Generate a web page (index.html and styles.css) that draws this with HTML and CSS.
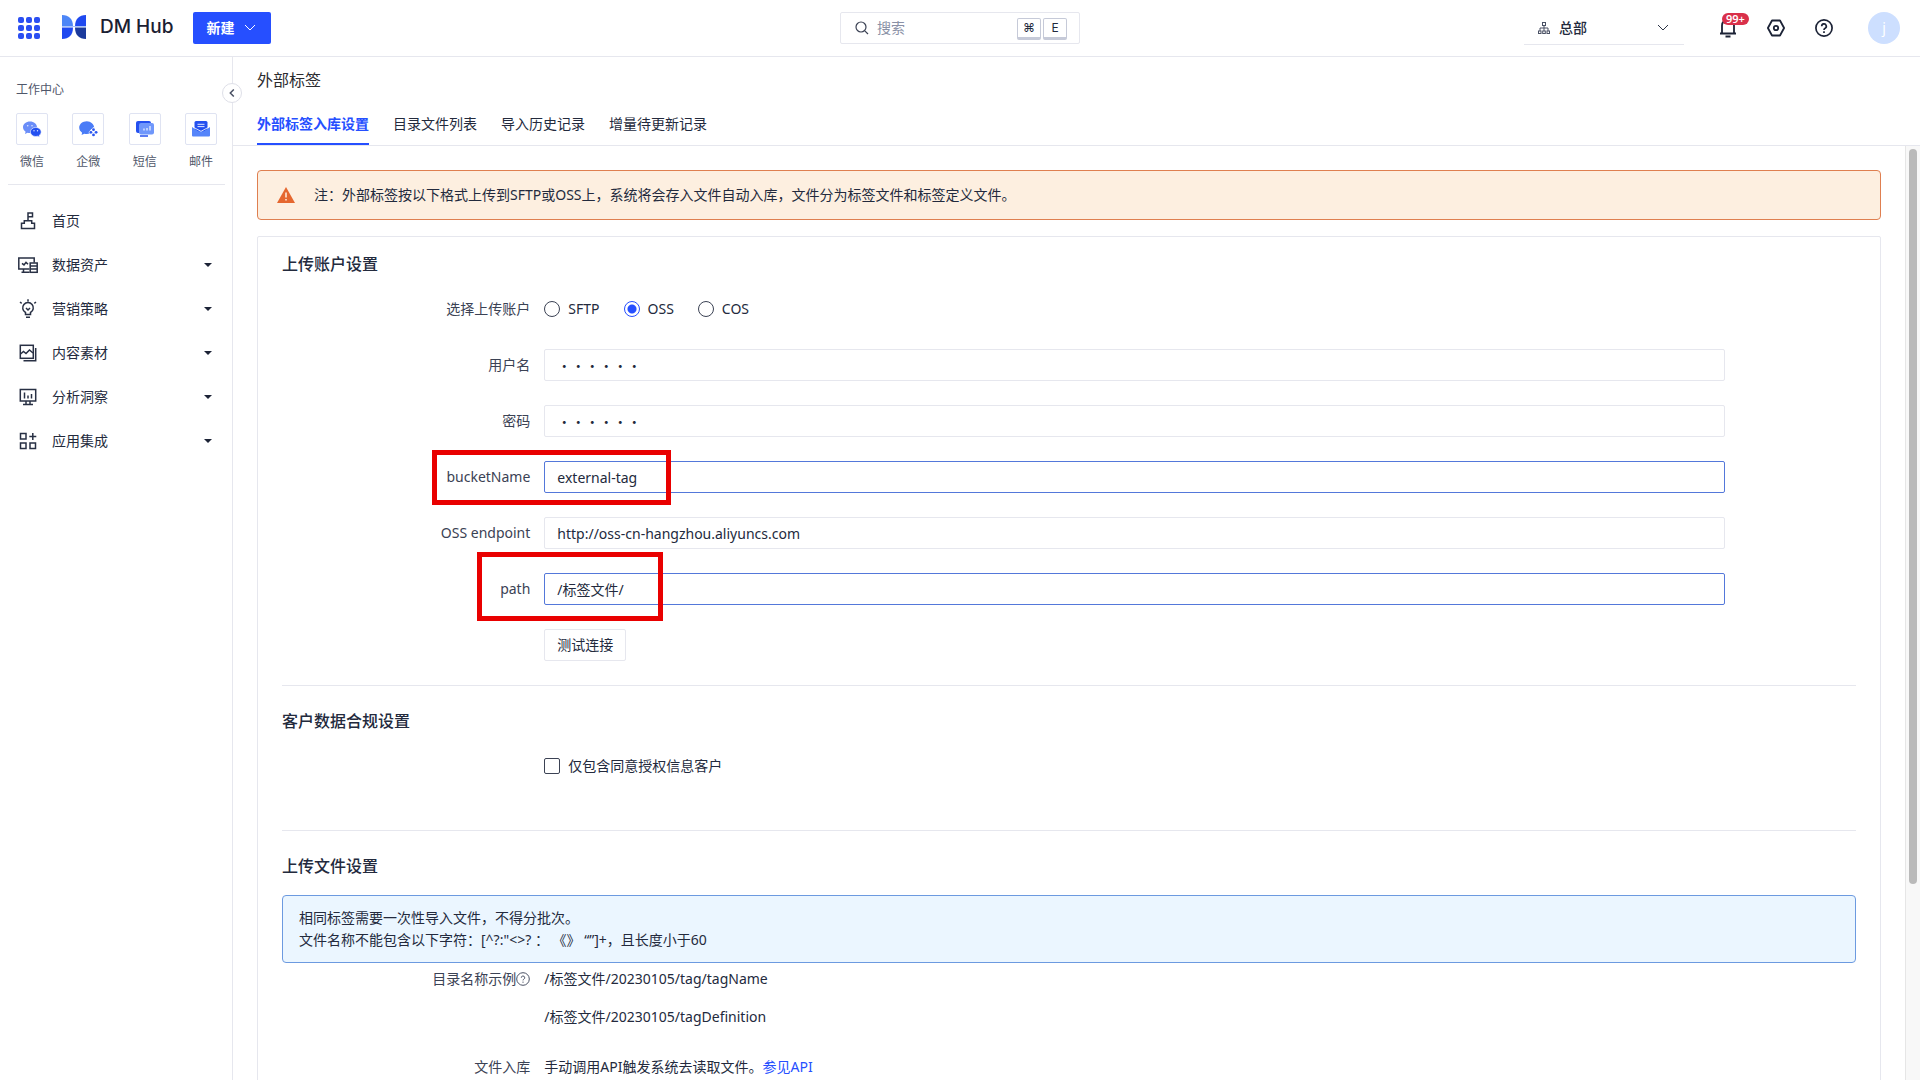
FILE: index.html
```html
<!DOCTYPE html>
<html lang="zh-CN">
<head>
<meta charset="utf-8">
<meta name="viewport" content="width=device-width, initial-scale=1">
<title>外部标签 - DM Hub</title>
<link rel="stylesheet" href="styles.css">
</head>
<body>
<header class="topbar">
  <button class="icon-btn apps" aria-label="应用">
    <svg width="22" height="22" viewBox="0 0 22 22" fill="#2b4ff2"><rect width="6" height="6" rx="2"/><rect x="8" width="6" height="6" rx="2"/><rect x="16" width="6" height="6" rx="2"/><rect y="8" width="6" height="6" rx="2"/><rect x="8" y="8" width="6" height="6" rx="2"/><rect x="16" y="8" width="6" height="6" rx="2"/><rect y="16" width="6" height="6" rx="2"/><rect x="8" y="16" width="6" height="6" rx="2"/><rect x="16" y="16" width="6" height="6" rx="2"/></svg>
  </button>
  <a class="brand" href="#">
    <svg width="24" height="24" viewBox="0 0 24 24"><path fill="#4d86f7" d="M0 0C7 0 11 4 11 11.500H0Z"/><path fill="#1f49f0" d="M24 0C17 0 13 4 13 11.500H24Z"/><path fill="#1f49f0" d="M0 12.500H11C11 20 7 24 0 24Z"/><path fill="#1b3a9c" d="M24 12.500H13C13 20 17 24 24 24Z"/><path fill="#a9c4fb" d="M0 11h24v1H0z"/></svg>
    <span>DM Hub</span>
  </a>
  <button class="create">新建
    <svg width="12" height="8" viewBox="0 0 12 8" fill="none" stroke="#fff"><path d="M1 1l5 5 5-5"/></svg>
  </button>
  <label class="search">
    <svg width="14" height="14" viewBox="0 0 14 14" fill="none" stroke="#3b4254" stroke-width="1.200"><circle cx="6" cy="6" r="5"/><path d="M9.800 9.800L13 13"/></svg>
    <input type="search" placeholder="搜索" aria-label="搜索">
    <kbd>⌘</kbd><kbd>E</kbd>
  </label>
  <div class="tools">
    <button class="org">
      <svg width="12" height="12" viewBox="0 0 12 12" fill="none" stroke="#4a5164"><rect x="4.500" y=".5" width="3" height="3"/><path d="M6 3.500V9M2 9V6h8v3"/><rect x=".5" y="9" width="2.500" height="2.500"/><rect x="4.700" y="9" width="2.600" height="2.500"/><rect x="9" y="9" width="2.500" height="2.500"/></svg>
      <span>总部</span>
      <svg width="12" height="8" viewBox="0 0 12 8" fill="none" stroke="#2c3345"><path d="M1 1l5 5 5-5"/></svg>
    </button>
    <button class="icon-btn bell" aria-label="通知">
      <svg width="18" height="20" viewBox="0 0 18 20" fill="none" stroke="#1c2336" stroke-width="1.800"><path d="M1 15.500h16M3 15.500V7.500a6 6 0 0 1 12 0v8M6.500 18.500h5"/></svg>
      <span class="count">99+</span>
    </button>
    <button class="icon-btn" aria-label="设置">
      <svg width="18" height="18" viewBox="0 0 18 18" fill="none" stroke="#1c2336" stroke-width="1.800"><path stroke-linejoin="round" d="M5 1.500h8L17.100 9 13 16.500H5L.9 9Z"/><circle cx="9" cy="9" r="2.200"/></svg>
    </button>
    <button class="icon-btn" aria-label="帮助">
      <svg width="18" height="18" viewBox="0 0 18 18" fill="none" stroke="#1c2336" stroke-width="1.700"><circle cx="9" cy="9" r="8.100"/><path d="M6.700 7.200a2.300 2.300 0 1 1 3.400 2C9.300 9.600 9 10 9 10.900M9 12.200v1.700"/></svg>
    </button>
    <button class="avatar">j</button>
  </div>
</header>

<div class="shell">
  <aside class="sidebar">
    <button class="collapse" aria-label="收起">
      <svg width="6" height="8" viewBox="0 0 6 8" fill="none" stroke="#4a5164" stroke-width="1.500"><path d="M4.800 .5L1.300 4l3.500 3.500"/></svg>
    </button>
    <section class="center">
      <h2>工作中心</h2>
      <div class="quick">
        <a href="#"><i><svg width="20" height="20" viewBox="0 0 20 20"><path fill="#6a8df8" d="M8 2.500c-4 0-7 2.500-7 5.800 0 1.900 1 3.400 2.600 4.500L3 15l2.500-1.300c.8.200 1.600.3 2.500.3 4 0 7-2.500 7-5.700S12 2.500 8 2.500Z"/><path fill="#2350f0" stroke="#fff" stroke-width=".6" d="M13.800 8.400c-3 0-5.400 2-5.400 4.500s2.400 4.600 5.400 4.600c.7 0 1.300-.1 1.900-.3l1.900 1-.5-1.700c1.300-.8 2.100-2.100 2.100-3.600 0-2.500-2.400-4.500-5.400-4.500Z"/><g fill="#dfe7ff"><circle cx="5.700" cy="6.700" r=".8"/><circle cx="10" cy="6.700" r=".8"/><circle cx="12" cy="11.800" r=".7"/><circle cx="15.500" cy="11.800" r=".7"/></g></svg></i>微信</a>
        <a href="#"><i><svg width="20" height="20" viewBox="0 0 20 20"><path fill="#4a7cf7" d="M8.800 2.200C4.600 2.200 1.200 5 1.200 8.600c0 2.100 1.100 3.900 2.900 5.100l-.5 2.400 2.700-1.300c.8.200 1.600.3 2.500.3 1 0 2-.2 2.900-.5l1.200-4.200 3.300-1.500c-.1-3.700-3.300-6.700-7.400-6.700Z"/><path fill="#fff" d="M15.500 8l5 5.300-5 5.300-5-5.300Z"/><g fill="#2b57f0"><circle cx="15.500" cy="10.700" r="1.400"/><circle cx="15.500" cy="15.900" r="1.400"/><circle cx="12.900" cy="13.300" r="1.400"/><circle cx="18.100" cy="13.300" r="1.400"/></g></svg></i>企微</a>
        <a href="#"><i><svg width="20" height="20" viewBox="0 0 20 20"><rect x="1" y="2" width="15" height="12" rx="2" fill="#2450ef"/><rect x="4" y="4" width="15" height="11.500" rx="2" fill="#6f97fb"/><path stroke="#e6edff" stroke-width="1.300" d="M9 11.500v-2M12 11.500V9M15 11.500V7"/><path stroke="#2450ef" stroke-width="1.500" d="M5 17h8"/></svg></i>短信</a>
        <a href="#"><i><svg width="20" height="20" viewBox="0 0 20 20"><rect x="3.500" y="2" width="13" height="11" rx="1.500" fill="#2450ef"/><path stroke="#dfe7ff" d="M6.500 5.300h7M6.500 7.600h7"/><path fill="#5585fa" d="M1 8l6.200 4.300h5.600L19 8v8.500a1 1 0 0 1-1 1H2a1 1 0 0 1-1-1Z"/><path fill="none" stroke="#fff" stroke-width=".8" d="M2.800 8.500L10 12.300l7.200-3.800"/></svg></i>邮件</a>
      </div>
    </section>
    <nav class="menu">
      <a href="#"><svg viewBox="0 0 20 20"><path d="M3.500 17.500v-5.300h2.800V9.700h7.400v2.500h2.800v5.300ZM10 9.700V2h4.500v3.800H10"/></svg><span>首页</span></a>
      <a href="#"><svg viewBox="0 0 20 20"><path d="M11.500 14H.8V3h15.400v4.500M5.500 14v3.300M3.500 17.300h8M4 8.300l2 1.600 2-2.600 2 2"/><rect x="12.200" y="8" width="7" height="9.300"/><path d="M12.200 11h7M12.200 14h7"/></svg><span>数据资产</span><b class="caret"></b></a>
      <a href="#"><svg viewBox="0 0 20 20"><path d="M7.500 15.500v-2a5.300 5.300 0 1 1 5 0v2ZM8 18.200h4M8 9l2 2 2-2M10 .3v2.200M2 3l1.700 1.300M18 3l-1.700 1.300"/></svg><span>营销策略</span><b class="caret"></b></a>
      <a href="#"><svg viewBox="0 0 20 20"><rect x="2.300" y="2.300" width="13" height="13"/><path d="M5.500 17.700h12.200V5M2.500 11l3-2.500 2.500 2L11.500 7l3.500 3"/></svg><span>内容素材</span><b class="caret"></b></a>
      <a href="#"><svg viewBox="0 0 20 20"><rect x="2.300" y="2.500" width="15.400" height="11.500"/><path d="M8 14v3.500M12 14v3.500M5 17.500h10M6.500 5.500v6M10 8.500v3M13.500 7v4.500"/></svg><span>分析洞察</span><b class="caret"></b></a>
      <a href="#"><svg viewBox="0 0 20 20"><rect x="2.500" y="2.500" width="5.500" height="5.500"/><rect x="2.500" y="12" width="5.500" height="5.500"/><rect x="12" y="12" width="5.500" height="5.500"/><path d="M14.800 2v7M11.300 5.500h7"/></svg><span>应用集成</span><b class="caret"></b></a>
    </nav>
  </aside>

  <main class="main">
    <div class="page-head">
      <h1>外部标签</h1>
      <nav class="tabs">
        <a class="active" href="#">外部标签入库设置</a>
        <a href="#">目录文件列表</a>
        <a href="#">导入历史记录</a>
        <a href="#">增量待更新记录</a>
      </nav>
    </div>
    <div class="viewport">
      <div class="content">
        <div class="warning" role="note">
          <svg width="18" height="16" viewBox="0 0 18 16"><path fill="#e5672f" d="M9 0l9 16H0Z"/><path stroke="#fde9d6" stroke-width="1.600" d="M9 5.500v5M9 12v1.600"/></svg>
          <p>注：外部标签按以下格式上传到SFTP或OSS上，系统将会存入文件自动入库，文件分为标签文件和标签定义文件。</p>
        </div>
        <form class="card">
          <section class="section">
            <h2>上传账户设置</h2>
            <div class="field" role="radiogroup" aria-labelledby="account">
              <span class="name" id="account">选择上传账户</span>
              <div class="options">
                <label><input type="radio" name="account">SFTP</label>
                <label><input type="radio" name="account" checked>OSS</label>
                <label><input type="radio" name="account">COS</label>
              </div>
            </div>
            <div class="field"><label class="name" for="user">用户名</label><div class="control"><input class="secret" id="user" type="password" value="123456"></div></div>
            <div class="field"><label class="name" for="pass">密码</label><div class="control"><input class="secret" id="pass" type="password" value="123456"></div></div>
            <div class="field"><label class="name" for="bucket">bucketName</label><div class="control"><input class="focus" id="bucket" type="text" value="external-tag"><span class="mark mark-bucket"></span></div></div>
            <div class="field"><label class="name" for="endpoint">OSS endpoint</label><div class="control"><input id="endpoint" type="text" value="http://oss-cn-hangzhou.aliyuncs.com"></div></div>
            <div class="field"><label class="name" for="path">path</label><div class="control"><input class="focus" id="path" type="text" value="/标签文件/"><span class="mark mark-path"></span></div></div>
            <div class="field"><button class="test" type="button">测试连接</button></div>
          </section>
          <section class="section roomy">
            <h2>客户数据合规设置</h2>
            <div class="field"><div class="options"><label><input type="checkbox">仅包含同意授权信息客户</label></div></div>
          </section>
          <section class="section">
            <h2>上传文件设置</h2>
            <div class="info">
              <p>相同标签需要一次性导入文件，不得分批次。</p>
              <p>文件名称不能包含以下字符：[^?:"&lt;&gt;? ： 《》 “”]+，且长度小于60</p>
            </div>
            <div class="field"><span class="name">目录名称示例<svg width="14" height="14" viewBox="0 0 14 14" fill="none" stroke="#4a5164"><circle cx="7" cy="7" r="6.300"/><path d="M5.300 5.700a1.700 1.700 0 1 1 2.500 1.500C7.200 7.500 7 7.800 7 8.400M7 9.600v1.200"/></svg></span><span>/标签文件/20230105/tag/tagName</span></div>
            <div class="field wide"><span>/标签文件/20230105/tagDefinition</span></div>
            <div class="field"><span class="name">文件入库</span><span>手动调用API触发系统去读取文件。<a href="#">参见API</a></span></div>
          </section>
        </form>
      </div>
      <div class="rail" aria-hidden="true"><div class="thumb"></div></div>
    </div>
  </main>
</div>
</body>
</html>
```
FILE: styles.css
```css
* { box-sizing: border-box; }

:root {
  --ink: #232a3d;
  --line: #e6e7ee;
  --blue: #264fff;
}

body {
  margin: 0;
  height: 100vh;
  display: flex;
  flex-direction: column;
  overflow: hidden;
  background: #fff;
  color: var(--ink);
  font: 14px/22px "Noto Sans", "Noto Sans CJK SC", sans-serif;
}

h1, h2, p { margin: 0; }
a { color: inherit; text-decoration: none; }
svg { display: block; flex: none; }
button, input { font: inherit; color: inherit; }
button { background: none; border: 0; padding: 0; cursor: pointer; }

/* top bar */
.topbar {
  position: relative;
  flex: none;
  display: flex;
  align-items: center;
  height: 57px;
  padding: 0 20px 0 18px;
  border-bottom: 1px solid var(--line);
}
.brand {
  display: flex;
  align-items: center;
  gap: 14px;
  margin: 0 20px 2px 22px;
  font-family: Inter, sans-serif;
  font-size: 19px;
  font-weight: 500;
  color: #1a2032;
}
.create {
  display: flex;
  align-items: center;
  justify-content: space-between;
  width: 78px;
  height: 32px;
  padding: 0 15px 0 13px;
  border-radius: 2px;
  background: var(--blue);
  color: #fff;
  font-weight: 700;
}
.search {
  position: absolute;
  left: 50%;
  top: 12px;
  display: flex;
  align-items: center;
  gap: 2px;
  width: 240px;
  height: 32px;
  margin-left: -120px;
  padding: 0 12px 0 14px;
  border: 1px solid var(--line);
  border-radius: 2px;
}
.search input {
  flex: 1;
  min-width: 0;
  padding: 0 6px;
  border: 0;
  outline: 0;
  background: none;
}
.search input::placeholder { color: #8a91a6; opacity: 1; }
kbd {
  width: 24px;
  height: 22px;
  margin-top: 2px;
  border: 1px solid #c6cad8;
  border-bottom-width: 3px;
  border-radius: 2px;
  font: 12px/18px Inter, "DejaVu Sans", sans-serif;
  text-align: center;
}
.tools {
  display: flex;
  align-items: center;
  gap: 30px;
  margin-left: auto;
}
.org {
  display: flex;
  align-items: center;
  gap: 9px;
  width: 160px;
  height: 33px;
  padding: 0 15px 0 14px;
  border-bottom: 1px solid var(--line);
  font-weight: 500;
}
.org span { flex: 1; text-align: left; }
.bell { position: relative; margin-left: 5px; }
.count {
  position: absolute;
  left: 3px;
  top: -5px;
  padding: 0 4px;
  border-radius: 6px;
  background: #d9304a;
  color: #fff;
  font-size: 11px;
  font-weight: 600;
  line-height: 12px;
}
.avatar {
  width: 32px;
  height: 32px;
  margin-left: 5px;
  border-radius: 50%;
  background: #cddfff;
  color: #fff;
}

/* side bar */
.shell { flex: 1; display: flex; min-height: 0; }
.sidebar {
  position: relative;
  flex: none;
  width: 233px;
  border-right: 1px solid var(--line);
}
.collapse {
  position: absolute;
  z-index: 1;
  top: 26px;
  right: -10px;
  display: grid;
  place-items: center;
  width: 20px;
  height: 20px;
  border: 1px solid #dedfe8;
  border-radius: 50%;
  background: #fff;
}
.center {
  margin: 0 7px 0 8px;
  padding: 24px 8px 13px 8px;
  border-bottom: 1px solid var(--line);
  font-size: 12px;
  line-height: 18px;
  color: #50576a;
}
.center h2 { font-size: 12px; font-weight: 400; }
.quick { display: flex; justify-content: space-between; margin-top: 14px; }
.quick a { display: flex; flex-direction: column; gap: 8px; text-align: center; }
.quick i {
  display: grid;
  place-items: center;
  width: 32px;
  height: 32px;
  border: 1px solid #dfe3f2;
  border-radius: 2px;
}
.menu { padding-top: 14px; }
.menu a {
  display: flex;
  align-items: center;
  gap: 14px;
  height: 44px;
  padding: 0 20px 0 18px;
}
.menu svg {
  width: 20px;
  height: 20px;
  fill: none;
  stroke: #283044;
  stroke-width: 1.5;
}
.caret {
  margin-left: auto;
  border: 4px solid transparent;
  border-top-color: #1c2336;
  border-bottom: 0;
}

/* page head */
.main { flex: 1; min-width: 0; display: flex; flex-direction: column; }
.page-head { padding: 11px 24px 0; border-bottom: 1px solid var(--line); }
h1 { font-size: 16px; line-height: 24px; font-weight: 400; color: #2b2b2f; }
.tabs { display: flex; gap: 24px; margin-top: 21px; }
.tabs a { padding-bottom: 8px; border-bottom: 2px solid transparent; }
.tabs .active { border-color: var(--blue); color: var(--blue); font-weight: 700; }

/* scrolling area */
.viewport { flex: 1; display: flex; min-height: 0; }
.content {
  flex: 1;
  min-width: 0;
  padding: 24px;
  overflow-y: auto;
  scrollbar-width: none;
}
.rail {
  width: 15px;
  padding: 3px 3px 0;
  border-left: 1px solid #e6e6e6;
  background: #f8f8f8;
}
.thumb { height: 79%; border-radius: 4px; background: #bababa; }

.warning {
  display: flex;
  align-items: center;
  gap: 19px;
  padding: 13px 19px;
  border: 1px solid #df7f50;
  border-radius: 4px;
  background: #fdefe0;
}
.card {
  margin-top: 16px;
  padding: 0 24px;
  border: 1px solid var(--line);
  border-radius: 2px;
}
.section { padding: 23px 0 24px; }
.section:first-child { padding-top: 15px; }
.section + .section { border-top: 1px solid var(--line); }
.roomy { padding-bottom: 48px; }
.section h2 { margin-bottom: 17px; font-size: 16px; line-height: 24px; font-weight: 500; }

.field {
  display: grid;
  grid-template-columns: 4fr 18fr 2fr;
  align-items: center;
  min-height: 32px;
}
.field + .field { margin-top: 24px; }
.field > * { grid-column: 2; }
.field > .name {
  grid-column: 1;
  display: flex;
  align-items: center;
  justify-content: flex-end;
  padding-right: 14px;
  color: #3b4254;
}
.control { position: relative; }
.control input {
  display: block;
  width: 100%;
  height: 32px;
  padding: 0 12px;
  border: 1px solid var(--line);
  border-radius: 2px;
  background: #fff;
}
.control .focus { border-color: #5478da; }
.control .secret { font-family: "Noto Sans CJK SC", sans-serif; }
.options { display: flex; gap: 24px; }
.options label { display: flex; align-items: center; gap: 8px; }
.options input {
  appearance: none;
  width: 16px;
  height: 16px;
  margin: 0;
  border: 1px solid #3b4254;
  border-radius: 2px;
}
.options [type="radio"] { border-radius: 50%; }
.options [type="radio"]:checked {
  border-color: var(--blue);
  background: radial-gradient(circle, var(--blue) 4px, #fff 5px);
}
.test {
  justify-self: start;
  height: 32px;
  padding: 0 12px;
  border: 1px solid var(--line);
  border-radius: 2px;
}
.info {
  padding: 11px 16px;
  border: 1px solid #6c9ae0;
  border-radius: 4px;
  background: #ebf6ff;
}
.field.wide { margin-top: 6px; }
.wide + .field { margin-top: 18px; }
.field a { color: var(--blue); }

/* highlight frames over the fields */
.mark { position: absolute; border: 5px solid #e90000; pointer-events: none; }
.mark-bucket { left: -112px; top: -11px; width: 239px; height: 55px; }
.mark-path { left: -67px; top: -21px; width: 186px; height: 69px; }
```
